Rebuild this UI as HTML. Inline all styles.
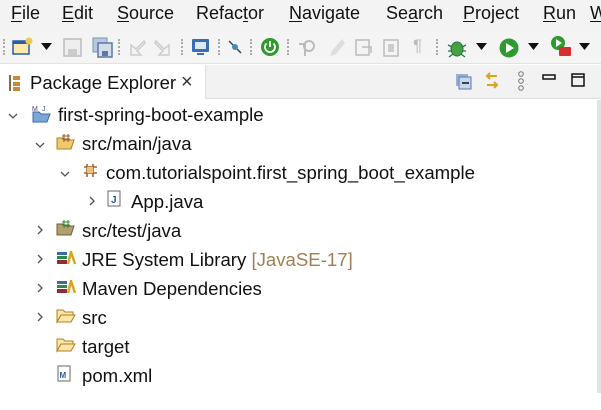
<!DOCTYPE html>
<html><head><style>
*{margin:0;padding:0;box-sizing:border-box}
body{width:601px;height:410px;overflow:hidden;background:#fff;font-family:"Liberation Sans",sans-serif;color:#111;position:relative}
.menu{position:absolute;top:0;left:0;width:601px;height:30px;background:#f3f3f3;font-size:18px}
.menu span{position:absolute;top:3px}
.menu u{text-decoration:underline;text-underline-offset:2px}
.tb{position:absolute;top:30px;left:0;width:601px;height:34px;background:#f4f4f4;border-bottom:1px solid #e2e2e2}
.ic{position:absolute}
.sep{position:absolute;top:39px;width:2px;height:16px;border-left:2px dotted #aaa}
.tabbar{position:absolute;top:65px;left:205px;width:396px;height:34px;background:#f2f2f2;border-left:1px solid #ddd;border-bottom:1px solid #ddd}
.tab{position:absolute;top:65px;left:0;width:205px;height:35px;background:#fff;font-size:18.5px}
.row{position:absolute;font-size:18.6px;white-space:nowrap;height:28px;line-height:28px}
.chev{position:absolute}
.rb{position:absolute;left:597px;top:100px;width:4px;height:293px;background:#e4e4e4}
</style></head><body>
<div class="menu">
<span style="left:11px"><u>F</u>ile</span>
<span style="left:62px"><u>E</u>dit</span>
<span style="left:117px"><u>S</u>ource</span>
<span style="left:196px">Refac<u>t</u>or</span>
<span style="left:289px"><u>N</u>avigate</span>
<span style="left:386px">Se<u>a</u>rch</span>
<span style="left:463px"><u>P</u>roject</span>
<span style="left:543px"><u>R</u>un</span>
<span style="left:590px"><u>W</u></span>
</div>
<div class="tb"></div>
<div class="sep" style="left:3px"></div>
<svg class="ic" style="left:12px;top:36px" width="22" height="22"><rect x="1" y="5" width="16" height="13" fill="#fbe9b0" stroke="#2b5ca8" stroke-width="1.5"/><rect x="1" y="5" width="16" height="3" fill="#2b5ca8"/><circle cx="17" cy="5" r="3.5" fill="#f2c94c"/></svg>
<svg class="ic" style="left:41px;top:43px" width="12" height="8"><path d="M0 0H11L5.5 7Z" fill="#111"/></svg>
<svg class="ic" style="left:63px;top:38px" width="20" height="20"><rect x="1" y="1" width="17" height="17" fill="#eee" stroke="#bbb" stroke-width="1.5"/><rect x="5" y="11" width="9" height="6" fill="#ccc"/></svg>
<svg class="ic" style="left:92px;top:37px" width="22" height="22"><rect x="1" y="1" width="14" height="14" fill="#b9c8de" stroke="#7c93b6"/><rect x="6" y="6" width="14" height="14" fill="#d2dcea" stroke="#5d78a3" stroke-width="1.5"/><rect x="10" y="14" width="6" height="5" fill="#5d78a3"/></svg>
<div class="sep" style="left:118px"></div>
<svg class="ic" style="left:127px;top:38px" width="20" height="20"><path d="M17 3 L9 11 L4 7 V17 H14 L10 13 L18 5Z" fill="none" stroke="#ccc" stroke-width="1.5"/></svg>
<svg class="ic" style="left:153px;top:38px" width="20" height="20"><path d="M3 3 L11 11 L16 7 V17 H6 L10 13 L2 5Z" fill="none" stroke="#ccc" stroke-width="1.5"/></svg>
<div class="sep" style="left:181px"></div>
<svg class="ic" style="left:191px;top:37px" width="20" height="20"><rect x="1" y="2" width="17" height="13" rx="1" fill="#3b6db5"/><rect x="4" y="5" width="11" height="7" fill="#dfe8f5"/><rect x="6" y="16" width="7" height="2" fill="#3b6db5"/></svg>
<div class="sep" style="left:218px"></div>
<svg class="ic" style="left:228px;top:40px" width="14" height="14"><line x1="1" y1="1" x2="13" y2="13" stroke="#345" stroke-width="1.5"/><circle cx="7" cy="7" r="3" fill="#4a8ab8"/></svg>
<div class="sep" style="left:250px"></div>
<svg class="ic" style="left:259px;top:36px" width="22" height="22"><circle cx="11" cy="11" r="9" fill="#2f9a2f"/><path d="M11 5v6M7.5 7.5a5 5 0 1 0 7 0" stroke="#fff" stroke-width="1.8" fill="none"/></svg>
<div class="sep" style="left:287px"></div>
<svg class="ic" style="left:297px;top:38px" width="20" height="20"><circle cx="12" cy="8" r="5" fill="none" stroke="#bbb" stroke-width="2"/><path d="M2 6h6v12" stroke="#bbb" stroke-width="2" fill="none"/></svg>
<svg class="ic" style="left:328px;top:38px" width="18" height="20"><path d="M14 1 L4 13 L2 18 L8 16 L17 5Z" fill="#ddd"/></svg>
<svg class="ic" style="left:354px;top:38px" width="20" height="20"><rect x="2" y="2" width="13" height="15" fill="none" stroke="#bbb" stroke-width="1.5"/><path d="M8 9h9v6" stroke="#bbb" stroke-width="1.5" fill="none"/></svg>
<svg class="ic" style="left:382px;top:38px" width="18" height="20"><rect x="2" y="2" width="14" height="16" fill="none" stroke="#bbb" stroke-width="1.5"/><rect x="6" y="6" width="6" height="8" fill="#ccc"/></svg>
<div class="ic" style="left:413px;top:36px;font-size:17px;color:#bbb">¶</div>
<div class="sep" style="left:436px"></div>
<svg class="ic" style="left:446px;top:37px" width="22" height="22"><ellipse cx="11" cy="12" rx="6" ry="7" fill="#4aa040" stroke="#274" /><path d="M2 8l4 2M20 8l-4 2M2 14h4M20 14h-4M3 20l4-3M19 20l-4-3" stroke="#274" stroke-width="1.3"/></svg>
<svg class="ic" style="left:476px;top:43px" width="12" height="8"><path d="M0 0H11L5.5 7Z" fill="#111"/></svg>
<svg class="ic" style="left:498px;top:37px" width="22" height="22"><circle cx="11" cy="11" r="9.5" fill="#2f9a2f"/><path d="M8 6 L16 11 L8 16Z" fill="#fff"/></svg>
<svg class="ic" style="left:528px;top:43px" width="12" height="8"><path d="M0 0H11L5.5 7Z" fill="#111"/></svg>
<svg class="ic" style="left:550px;top:35px" width="22" height="24"><circle cx="8" cy="8" r="7" fill="#2f9a2f"/><path d="M6 4 L12 8 L6 12Z" fill="#fff"/><rect x="9" y="12" width="12" height="9" rx="1" fill="#d43030"/></svg>
<svg class="ic" style="left:579px;top:43px" width="12" height="8"><path d="M0 0H11L5.5 7Z" fill="#111"/></svg>

<div class="tabbar"></div>
<div class="tab">
<svg class="ic" style="left:9px;top:10px" width="12" height="16"><rect x="0" y="0" width="2" height="16" fill="#8a6a3a"/><rect x="4" y="1" width="7" height="4" fill="#c88a3a"/><rect x="4" y="7" width="7" height="4" fill="#c88a3a"/><rect x="4" y="12" width="7" height="4" fill="#c88a3a"/></svg>
<span style="position:absolute;left:30px;top:7px">Package Explorer</span>
<span style="position:absolute;left:181px;top:6px;font-size:20px;color:#333">×</span>
</div>
<svg class="ic" style="left:456px;top:74px" width="16" height="16"><rect x="0" y="0" width="12" height="12" fill="#9ab0d0"/><rect x="3" y="3" width="12" height="12" fill="#c9d6ea" stroke="#5a78a8"/><rect x="6" y="8" width="7" height="2" fill="#345"/></svg>
<svg class="ic" style="left:483px;top:72px" width="18" height="18"><path d="M14 4H4M7 1 4 4 7 7M4 13H14M11 10 14 13 11 16" stroke="#d9a520" stroke-width="2" fill="none"/></svg>
<svg class="ic" style="left:517px;top:71px" width="8" height="20"><circle cx="4" cy="3" r="2.3" fill="none" stroke="#777"/><circle cx="4" cy="10" r="2.3" fill="none" stroke="#777"/><circle cx="4" cy="17" r="2.3" fill="none" stroke="#777"/></svg>
<svg class="ic" style="left:542px;top:74px" width="14" height="6"><rect x="1" y="1" width="12" height="4" fill="none" stroke="#111" stroke-width="1.5"/></svg>
<svg class="ic" style="left:571px;top:73px" width="14" height="14"><rect x="1" y="1" width="12" height="12" fill="none" stroke="#111" stroke-width="1.5"/><line x1="1" y1="4" x2="13" y2="4" stroke="#111" stroke-width="1.5"/></svg>

<svg class="chev" style="left:8px;top:113px" width="10" height="6"><path d="M1 1l4 4 4-4" stroke="#555" fill="none" stroke-width="1.3"/></svg>
<svg class="ic" style="left:32px;top:104px" width="20" height="20"><text x="0" y="7" font-size="7" fill="#446" font-family="Liberation Sans">M</text><text x="10" y="7" font-size="7" fill="#2a5aa0" font-family="Liberation Sans">J</text><path d="M1 8h6l2 2h9l-3 8H1Z" fill="#7aa6d8" stroke="#3a6aa8"/></svg>
<div class="row" style="left:58px;top:101px">first-spring-boot-example</div>

<svg class="chev" style="left:35px;top:142px" width="10" height="6"><path d="M1 1l4 4 4-4" stroke="#555" fill="none" stroke-width="1.3"/></svg>
<svg class="ic" style="left:56px;top:133px" width="20" height="18"><path d="M1 5h6l2 2h9l-3 9H1Z" fill="#f0c870" stroke="#b08020"/><path d="M8 1v8M12 1v8M6 3h8M6 6h8" stroke="#8a5a20"/></svg>
<div class="row" style="left:82px;top:130px">src/main/java</div>

<svg class="chev" style="left:60px;top:171px" width="10" height="6"><path d="M1 1l4 4 4-4" stroke="#555" fill="none" stroke-width="1.3"/></svg>
<svg class="ic" style="left:82px;top:162px" width="16" height="16"><path d="M2 5h13M2 11h13M5 2v13M11 2v13" stroke="#a06030" stroke-width="1.6"/><rect x="5" y="5" width="6" height="6" fill="#f0c070"/></svg>
<div class="row" style="left:106px;top:159px">com.tutorialspoint.first_spring_boot_example</div>

<svg class="chev" style="left:89px;top:196px" width="6" height="10"><path d="M1 1l4 4-4 4" stroke="#555" fill="none" stroke-width="1.3"/></svg>
<svg class="ic" style="left:107px;top:190px" width="14" height="18"><rect x="1" y="1" width="12" height="15" fill="#fff" stroke="#666"/><text x="4" y="13" font-size="10" font-weight="bold" fill="#2a5aa0" font-family="Liberation Sans">J</text></svg>
<div class="row" style="left:131px;top:188px">App.java</div>

<svg class="chev" style="left:37px;top:225px" width="6" height="10"><path d="M1 1l4 4-4 4" stroke="#555" fill="none" stroke-width="1.3"/></svg>
<svg class="ic" style="left:56px;top:219px" width="20" height="18"><path d="M1 5h6l2 2h9l-3 9H1Z" fill="#b0a070" stroke="#706030"/><path d="M8 1v8M12 1v8M6 3h8M6 6h8" stroke="#2a8a2a"/></svg>
<div class="row" style="left:82px;top:217px">src/test/java</div>

<svg class="chev" style="left:37px;top:254px" width="6" height="10"><path d="M1 1l4 4-4 4" stroke="#555" fill="none" stroke-width="1.3"/></svg>
<svg class="ic" style="left:57px;top:251px" width="20" height="14"><rect x="0" y="1" width="10" height="3" fill="#3a6aa8"/><rect x="0" y="5" width="10" height="3" fill="#2a8a4a"/><rect x="0" y="9" width="10" height="4" fill="#8a3030"/><path d="M11 13 L14 1 L18 13" stroke="#d9a520" stroke-width="2.5" fill="none"/></svg>
<div class="row" style="left:82px;top:246px">JRE System Library <span style="color:#a08050">[JavaSE-17]</span></div>

<svg class="chev" style="left:37px;top:283px" width="6" height="10"><path d="M1 1l4 4-4 4" stroke="#555" fill="none" stroke-width="1.3"/></svg>
<svg class="ic" style="left:57px;top:280px" width="20" height="14"><rect x="0" y="1" width="10" height="3" fill="#3a6aa8"/><rect x="0" y="5" width="10" height="3" fill="#2a8a4a"/><rect x="0" y="9" width="10" height="4" fill="#8a3030"/><path d="M11 13 L14 1 L18 13" stroke="#d9a520" stroke-width="2.5" fill="none"/></svg>
<div class="row" style="left:82px;top:275px">Maven Dependencies</div>

<svg class="chev" style="left:37px;top:312px" width="6" height="10"><path d="M1 1l4 4-4 4" stroke="#555" fill="none" stroke-width="1.3"/></svg>
<svg class="ic" style="left:56px;top:308px" width="20" height="16"><path d="M1 2h6l2 2h8v3H5L1 14Z" fill="#fbe5a8" stroke="#b08020"/><path d="M5 7h14l-4 7H1Z" fill="#fbe5a8" stroke="#b08020"/></svg>
<div class="row" style="left:82px;top:304px">src</div>

<svg class="ic" style="left:56px;top:337px" width="20" height="16"><path d="M1 2h6l2 2h8v3H5L1 14Z" fill="#fbe5a8" stroke="#b08020"/><path d="M5 7h14l-4 7H1Z" fill="#fbe5a8" stroke="#b08020"/></svg>
<div class="row" style="left:82px;top:333px">target</div>

<svg class="ic" style="left:57px;top:365px" width="15" height="18"><rect x="1" y="1" width="12" height="15" fill="#fff" stroke="#666"/><text x="2.5" y="13" font-size="8" font-weight="bold" fill="#2a5aa0" font-family="Liberation Sans">M</text></svg>
<div class="row" style="left:82px;top:362px">pom.xml</div>

<div class="rb"></div>
</body></html>
